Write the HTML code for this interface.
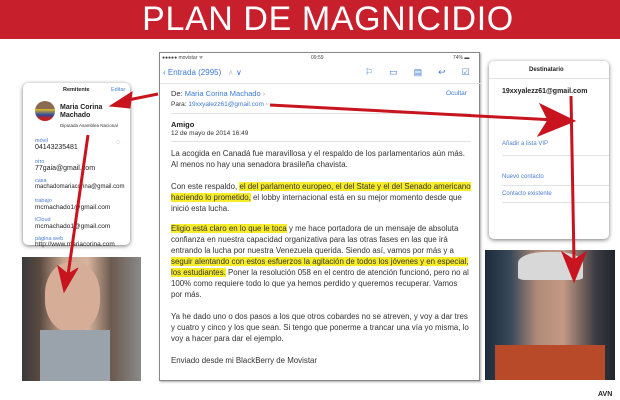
<!DOCTYPE html>
<html><head><meta charset="utf-8"><style>
*{margin:0;padding:0;box-sizing:border-box}
body{width:620px;height:400px;background:#fff;position:relative;overflow:hidden;font-family:"Liberation Sans",sans-serif}
.ab{position:absolute;white-space:nowrap}
.ban{position:absolute;left:0;top:0;width:620px;height:39px;background:#c81f2c;color:#fff;text-align:center;font-size:34px;line-height:39px;letter-spacing:0.6px;font-weight:300;padding-left:36px}
.mail{position:absolute;left:159px;top:52px;width:321px;height:329px;border:1px solid #888;background:#fff;box-shadow:1px 1px 2px #aaa}
.t{font-size:7.9px;color:#333;left:11px}
.hl{background:#f7ec2a}
.blue{color:#3d7ad0}
.pop{position:absolute;background:#fff;border-radius:5px;box-shadow:0 1px 4px #777}
.sm{font-size:5.5px;color:#4a7fd0}
.v{font-size:7px;color:#222}
.ln{position:absolute;height:1px;background:#e2e2e2}
</style></head><body>
<div class="ban">PLAN DE MAGNICIDIO</div>

<div class="mail">
<div class="ab" style="left:2px;top:2px;font-size:5px;color:#444">●●●●● movistar ᯤ</div>
<div class="ab" style="left:151px;top:2px;font-size:5px;color:#444">09:59</div>
<div class="ab" style="left:293px;top:2px;font-size:5px;color:#444">74% ▬</div>
<div class="ab blue" style="left:3px;top:15px;font-size:8px">‹ Entrada (2995) &nbsp;&nbsp;<span style="color:#ccc">∧</span> ∨</div>
<div class="ab blue" style="left:205px;top:14px;font-size:9px;letter-spacing:16px">⚐▭▤↩☑</div>
<div class="ln" style="left:0;top:30px;width:321px"></div>
<div class="ab" style="left:11px;top:36px;font-size:7.5px;color:#333">De: <span class="blue">Maria Corina Machado</span> <span style="color:#aaa">›</span></div>
<div class="ab blue" style="left:286px;top:37px;font-size:6.5px">Ocultar</div>
<div class="ab" style="left:11px;top:48px;font-size:6.5px;color:#333">Para: <span class="blue">19xxyalezz61@gmail.com</span> <span style="color:#aaa">›</span></div>
<div class="ln" style="left:11px;top:60px;width:300px"></div>
<div class="ab" style="left:11px;top:67px;font-size:7.5px;color:#222;font-weight:bold">Amigo</div>
<div class="ab" style="left:11px;top:77px;font-size:6.5px;color:#333">12 de mayo de 2014 16:49</div>
<div class="ln" style="left:11px;top:88px;width:300px"></div>
<div class="ab t" style="top:96px">La acogida en Canadá fue maravillosa y el respaldo de los parlamentarios aún más.</div>
<div class="ab t" style="top:107px">Al menos no hay una senadora brasileña chavista.</div>
<div class="ab t" style="top:129px">Con este respaldo, <span class="hl">el del parlamento europeo, el del State y el del Senado americano</span></div>
<div class="ab t" style="top:140px"><span class="hl">haciendo lo prometido,</span> el lobby internacional está en su mejor momento desde que</div>
<div class="ab t" style="top:151px">inició esta lucha.</div>
<div class="ab t" style="top:171px"><span class="hl">Eligio está claro en lo que le toca</span> y me hace portadora de un mensaje de absoluta</div>
<div class="ab t" style="top:182px">confianza en nuestra capacidad organizativa para las otras fases en las que irá</div>
<div class="ab t" style="top:193px">entrando la lucha por nuestra Venezuela querida. Siendo así, vamos por más y a</div>
<div class="ab t" style="top:204px"><span class="hl">seguir alentando con estos esfuerzos la agitación de todos los jóvenes y en especial,</span></div>
<div class="ab t" style="top:215px"><span class="hl">los estudiantes.</span> Poner la resolución 058 en el centro de atención funcionó, pero no al</div>
<div class="ab t" style="top:226px">100% como requiere todo lo que ya hemos perdido y queremos recuperar. Vamos</div>
<div class="ab t" style="top:237px">por más.</div>
<div class="ab t" style="top:259px">Ya he dado uno o dos pasos a los que otros cobardes no se atreven, y voy a dar tres</div>
<div class="ab t" style="top:270px">y cuatro y cinco y los que sean. Si tengo que ponerme a trancar una vía yo misma, lo</div>
<div class="ab t" style="top:281px">voy a hacer para dar el ejemplo.</div>
<div class="ab t" style="top:303px">Enviado desde mi BlackBerry de Movistar</div>
</div>

<div class="ab" style="left:22px;top:257px;width:119px;height:124px;background:linear-gradient(90deg,#3a3a3a 0,#5a4a40 15%,#c7a58f 35%,#d8b49e 55%,#6b5a50 75%,#8a8a88 100%)"></div>
<div class="ab" style="left:45px;top:262px;width:55px;height:70px;border-radius:45%;background:#d6ad96"></div>
<div class="ab" style="left:40px;top:330px;width:70px;height:51px;background:#9aa3ab"></div>
<div class="pop" style="left:23px;top:83px;width:107px;height:162px">
<div class="ab" style="left:40px;top:4px;font-size:5.5px;font-weight:bold;color:#222">Remitente</div>
<div class="ab sm" style="left:88px;top:4px">Editar</div>
<div class="ab" style="left:12px;top:18px;width:20px;height:20px;border-radius:50%;background:linear-gradient(#8a6a50 40%,#e8c020 40%,#2a4aa0 70%,#c02020 85%)"></div>
<div class="ab" style="left:37px;top:21px;font-size:7px;font-weight:bold;color:#222;line-height:8px">Maria Corina<br>Machado</div>
<div class="ab" style="left:37px;top:40px;font-size:4.5px;color:#333">Diputada Asamblea Nacional</div>
<div class="ab sm" style="left:12px;top:55px">móvil</div><div class="ab v" style="left:12px;top:61px">04143235481</div>
<div class="ab blue" style="left:93px;top:56px;font-size:7px">◌</div>
<div class="ab sm" style="left:12px;top:76px">otro</div><div class="ab v blue" style="left:12px;top:82px">77gaia@gmail.com</div>
<div class="ab sm" style="left:12px;top:95px">casa</div><div class="ab v" style="left:12px;top:101px;font-size:6px">machadomariacorina@gmail.com</div>
<div class="ab sm" style="left:12px;top:115px">trabajo</div><div class="ab v" style="left:12px;top:121px;font-size:6.5px">mcmachado1@gmail.com</div>
<div class="ab sm" style="left:12px;top:134px">iCloud</div><div class="ab v" style="left:12px;top:140px;font-size:6.5px">mcmachado1@gmail.com</div>
<div class="ab sm" style="left:12px;top:153px">página web</div><div class="ab v" style="left:12px;top:158px;font-size:6.5px">http://www.mariacorina.com</div>
</div>

<div class="ab" style="left:485px;top:250px;width:130px;height:130px;background:linear-gradient(90deg,#1c2a3c 0,#3a4a5a 20%,#b08a78 40%,#c49a86 60%,#3c3c44 85%,#20242c 100%)"></div>
<div class="ab" style="left:518px;top:252px;width:65px;height:28px;border-radius:40% 40% 10% 10%;background:#d8d8d8"></div>
<div class="ab" style="left:495px;top:345px;width:110px;height:35px;background:#b84a2a"></div>
<div class="pop" style="left:489px;top:61px;width:120px;height:178px">
<div class="ab" style="left:40px;top:6px;font-size:6px;font-weight:bold;color:#222">Destinatario</div>
<div class="ln" style="left:0;top:17px;width:120px"></div>
<div class="ab" style="left:13px;top:27px;font-size:7px;font-weight:bold;color:#222">19xxyalezz61@gmail.com</div>
<div class="ab sm" style="left:13px;top:80px;font-size:6px">Añadir a lista VIP</div>
<div class="ln" style="left:13px;top:94px;width:107px"></div>
<div class="ab sm" style="left:13px;top:113px;font-size:6px">Nuevo contacto</div>
<div class="ln" style="left:13px;top:124px;width:107px"></div>
<div class="ab sm" style="left:13px;top:130px;font-size:6px">Contacto existente</div>
<div class="ln" style="left:13px;top:141px;width:107px"></div>
</div>

<svg class="ab" style="left:0;top:0" width="620" height="400">
<g fill="#c8141e" stroke="#c8141e">
<path d="M158 94 L128 100" stroke-width="3"/>
<path d="M110 106 L132 92 L130 108Z"/>
<path d="M270 105 L555 120" stroke-width="3"/>
<path d="M575 121 L540 104 L548 120 L538 136Z"/>
<path d="M88 135 L68 275" stroke-width="3"/>
<path d="M64 292 L58 266 L68 274 L78 268Z"/>
<path d="M571 96 L574 260" stroke-width="3"/>
<path d="M574 282 L562 252 L574 260 L586 252Z"/>
</g>
</svg>
<div class="ab" style="left:598px;top:391px;font-size:7px;font-weight:bold;color:#222">AVN</div>
</body></html>
